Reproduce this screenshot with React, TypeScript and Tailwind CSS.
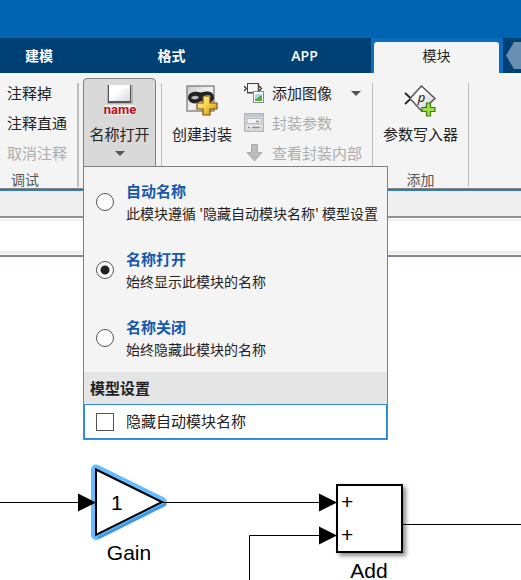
import { useState } from 'react';
import type { ReactNode } from 'react';

const uiFont = "font-['Noto_Sans_CJK_SC',sans-serif]";

function Caret() {
  return (
    <svg width="10" height="5" viewBox="0 0 10 5" aria-hidden="true">
      <path d="M0 0h10L5 5z" fill="#555" />
    </svg>
  );
}

function Separator({ wide = false }: { wide?: boolean }) {
  return <div className={`mt-[10px] mb-px shrink-0 bg-[#bdbdbd] ${wide ? 'w-[2px]' : 'w-px'}`} />;
}

function NameIcon() {
  return (
    <svg width="32" height="32" viewBox="0 0 32 32" aria-hidden="true">
      <defs>
        <linearGradient id="nameBox" x1="0" y1="0" x2="1" y2="1">
          <stop offset="0.4" stopColor="#fff" />
          <stop offset="1" stopColor="#d6d6d6" />
        </linearGradient>
      </defs>
      <rect x="3" y="0" width="26" height="19" fill="#b5b5b5" />
      <rect x="4" y="0" width="23" height="18" fill="#555" />
      <rect x="5" y="0" width="21" height="16" fill="url(#nameBox)" />
      <rect x="1" y="20" width="30" height="10" fill="#eee" />
      <text x="16" y="29" textAnchor="middle" fontSize="13" fontWeight="700" fontFamily="Liberation Sans Narrow, Roboto, sans-serif" fill="#b8141a">
        name
      </text>
    </svg>
  );
}

function MaskIcon() {
  return (
    <svg width="32" height="32" viewBox="0 0 32 32" aria-hidden="true">
      <defs>
        <linearGradient id="maskBox" x1="0" y1="0" x2="1" y2="1">
          <stop offset="0" stopColor="#c8c8c8" />
          <stop offset="0.5" stopColor="#f2f2f2" />
          <stop offset="1" stopColor="#bcbcbc" />
        </linearGradient>
        <linearGradient id="gold" x1="0" y1="0" x2="1" y2="1">
          <stop offset="0" stopColor="#fff3b0" />
          <stop offset="0.5" stopColor="#f8cf4a" />
          <stop offset="1" stopColor="#c98d12" />
        </linearGradient>
      </defs>
      <rect x="1" y="1" width="27" height="25" fill="url(#maskBox)" stroke="#8a8a8a" strokeWidth="1.5" />
      <path d="M2 13C2 8 7 6 12 7c3 1 5 0 8-.5 5-.5 8 2 8 6.5-1 5-6 6-9 4-2-1-4-1-6 0-5 3-10 1-11-4z" fill="#222" />
      <path d="M5 13c2-3 6-3 8-.5-2 2.500-6 2.500-8 .5zM18 12c2-2.500 5-2.500 7-.5-2 2-5 2.500-7 .5z" fill="#bcbcbc" />
      <path d="M17 11h7v7h7v6h-7v6h-7v-6h-6v-6h6z" fill="url(#gold)" stroke="#7d5206" strokeWidth="1.200" />
    </svg>
  );
}

function ParamWriterIcon() {
  return (
    <svg width="32" height="32" viewBox="0 0 32 32" aria-hidden="true">
      <defs>
        <linearGradient id="diamond" x1="0" y1="0" x2="1" y2="1">
          <stop offset="0.3" stopColor="#fff" />
          <stop offset="1" stopColor="#c9c9c9" />
        </linearGradient>
      </defs>
      <path d="M1 8l6 5.500-6 5.500" fill="none" stroke="#222" strokeWidth="1.800" />
      <path d="M17.500 1L31 13.500 17.500 26 6 13.500z" fill="url(#diamond)" stroke="#555" strokeWidth="1.500" />
      <text x="17.500" y="17" textAnchor="middle" fontSize="13" fontStyle="italic" fontFamily="Noto Sans, sans-serif" fill="#222">
        p
      </text>
      <path d="M22.500 18h4v4.500H31v4h-4.500V31h-4v-4.500H18v-4h4.500z" fill="#9ddd45" stroke="#3d7d14" strokeWidth="1.200" />
    </svg>
  );
}

function AddImageIcon() {
  return (
    <svg width="20" height="20" viewBox="0 0 20 20" aria-hidden="true">
      <path d="M0 3l2.500 2.500L0 8M15 3l2.500 2.500L15 8" fill="none" stroke="#333" strokeWidth="1.300" />
      <rect x="3.500" y="0.500" width="11" height="9" fill="#f5f5f5" stroke="#444" />
      <path d="M3 9.800H15M14.500 1v9" stroke="#444" strokeWidth="1.500" />
      <rect x="9.500" y="8.500" width="10" height="11" fill="#fff" stroke="#888" />
      <rect x="11" y="11" width="7" height="7" fill="#a9d5ef" />
      <path d="M11 18v-2l2-.5 3-2.500 2-.5V18z" fill="#4fae35" />
    </svg>
  );
}

function MaskParamsIcon() {
  return (
    <svg width="20" height="20" viewBox="0 0 20 20" aria-hidden="true">
      <rect x="0.500" y="0.500" width="19" height="18" fill="#d6d6d6" stroke="#b5b5b5" />
      <rect x="1" y="1" width="18" height="3" fill="#bfc9d1" />
      <rect x="3" y="5.500" width="14" height="5" fill="#f4f4f4" stroke="#bbb" />
      <rect x="3" y="12" width="14" height="4" fill="#e9e9e9" />
      <path d="M12 8.500h3M4 14.500h2M8 14.500h8" stroke="#8d8d8d" strokeWidth="1.500" />
    </svg>
  );
}

function LookInsideIcon() {
  return (
    <svg width="20" height="20" viewBox="0 0 20 20" aria-hidden="true">
      <path d="M7.500 1.500h6v8H18L10.500 18 3 9.500h4.500z" fill="#bcbcbc" stroke="#a9a9a9" />
    </svg>
  );
}

function ToolButton({ icon, label }: { icon: ReactNode; label: string }) {
  return (
    <button type="button" className="flex flex-col items-center pt-[12px] text-[15px] leading-6 whitespace-nowrap text-[#222]">
      {icon}
      <span className="mt-[5px]">{label}</span>
    </button>
  );
}

function RowButton({ icon, label, disabled = false, caret = false }: { icon?: ReactNode; label: string; disabled?: boolean; caret?: boolean }) {
  return (
    <button
      type="button"
      disabled={disabled}
      className="flex h-[30px] items-center gap-2 text-[15px] whitespace-nowrap text-[#222] disabled:text-[#adadad]"
    >
      {icon}
      <span>{label}</span>
      {caret && (
        <span className="ml-[11px]">
          <Caret />
        </span>
      )}
    </button>
  );
}

const nameOptions = [
  { id: 'auto', title: '自动名称', text: "此模块遵循 '隐藏自动模块名称' 模型设置" },
  { id: 'on', title: '名称打开', text: '始终显示此模块的名称' },
  { id: 'off', title: '名称关闭', text: '始终隐藏此模块的名称' },
];

function NameMenu() {
  const [mode, setMode] = useState('on');
  return (
    <div className="absolute top-full left-0 z-10 -mt-px w-[305px] border border-[#808080] bg-[#f4f4f4]">
      <div className="pt-px">
        {nameOptions.map((o) => (
          <label key={o.id} className="flex h-[68px] items-center gap-3 pl-3">
            <input
              type="radio"
              name="block-name"
              checked={mode === o.id}
              onChange={() => setMode(o.id)}
              className="size-[18px] shrink-0 appearance-none rounded-full border border-[#555] bg-white checked:bg-[radial-gradient(circle,#222_4px,white_5px)]"
            />
            <span className="flex flex-col whitespace-nowrap">
              <span className="text-[15px] leading-[23px] font-bold text-[#1658ae]">{o.title}</span>
              <span className="text-[14px] leading-[23px] text-[#222]">{o.text}</span>
            </span>
          </label>
        ))}
      </div>
      <h2 className="bg-[#e5e5e5] pl-1.5 text-[15px] leading-8 font-bold text-[#222]">模型设置</h2>
      <label className="flex h-[35px] items-center gap-3 border border-[#2b8ad8] bg-white pl-[11px] text-[15px] text-[#222]">
        <input type="checkbox" className="size-[18px] shrink-0 appearance-none border border-[#555] bg-white checked:bg-[#1658ae]" />
        隐藏自动模块名称
      </label>
    </div>
  );
}

function SectionLabel({ children }: { children: ReactNode }) {
  return <div className="text-[14px] leading-[17px] text-[#555]">{children}</div>;
}

function Tabs() {
  return (
    <nav role="tablist" className="flex h-[35px] bg-[#004175] font-['Open_Sans','Noto_Sans_CJK_SC',sans-serif] text-[14px] font-semibold text-white">
      <button role="tab" type="button" className="w-[105px] pr-[27px]">建模</button>
      <button role="tab" type="button" className="w-[133px]">格式</button>
      <button role="tab" type="button" className="w-[133px]">APP</button>
      <div className="flex w-[132px] bg-[#0d6cbd] pt-1 pr-1 pl-[3px]">
        <button role="tab" type="button" aria-selected="true" className="flex-1 rounded-t-[3px] bg-[#f4f4f4] pb-1 font-normal text-[#222]">
          模块
        </button>
      </div>
      <div className="min-w-0 flex-1 overflow-hidden pt-1 pl-[3px]">
        <svg width="40" height="27" viewBox="0 0 40 27" aria-hidden="true">
          <path d="M8 0H32l8 13.500L32 27H8L0 13.500z" fill="#6b8fb0" />
        </svg>
      </div>
    </nav>
  );
}

function Ribbon() {
  return (
    <div className="flex h-[118px] border-b-2 border-[#2f7ab8] bg-[#f4f4f4]">
      <div className="flex w-full border-b border-[#808080]">
        <section className="flex w-[77px] shrink-0 flex-col pt-[5px] pl-[7px]">
          <RowButton label="注释掉" />
          <RowButton label="注释直通" />
          <RowButton label="取消注释" disabled />
          <div className="mt-auto pl-1">
            <SectionLabel>调试</SectionLabel>
          </div>
        </section>
        <Separator wide />
        <section className="relative mt-[5px] ml-1 h-[89px] w-[73px] shrink-0">
          <button
            type="button"
            aria-haspopup="true"
            aria-expanded="true"
            className="flex size-full flex-col items-center rounded-t-[4px] border border-[#808080] bg-[#d9d9d9] pt-[6px] text-[15px] leading-6 whitespace-nowrap text-[#222]"
          >
            <NameIcon />
            <span className="mt-[5px]">名称打开</span>
            <span className="mt-[5px] flex">
              <Caret />
            </span>
          </button>
          <NameMenu />
        </section>
        <div className="w-[5px] shrink-0" />
        <Separator />
        <section className="flex w-[210px] shrink-0 gap-3 pl-[10px]">
          <div>
            <ToolButton icon={<MaskIcon />} label="创建封装" />
          </div>
          <div className="pt-[5px]">
            <RowButton icon={<AddImageIcon />} label="添加图像" caret />
            <RowButton icon={<MaskParamsIcon />} label="封装参数" disabled />
            <RowButton icon={<LookInsideIcon />} label="查看封装内部" disabled />
          </div>
        </section>
        <Separator />
        <section className="flex w-[95px] shrink-0 flex-col items-center">
          <ToolButton icon={<ParamWriterIcon />} label="参数写入器" />
          <div className="mt-auto">
            <SectionLabel>添加</SectionLabel>
          </div>
        </section>
        <Separator />
      </div>
    </div>
  );
}

function Diagram() {
  return (
    <svg className="block h-[323px] w-full" fontFamily="Liberation Sans, Arial, sans-serif" fontSize="21">
      <defs>
        <filter id="shade" x="-20%" y="-20%" width="150%" height="150%">
          <feDropShadow dx="3" dy="3" stdDeviation="2" floodOpacity="0.45" />
        </filter>
      </defs>
      <path d="M96 212.500L162 245 96 278z" fill="#66bcff" stroke="#66bcff" strokeWidth="10" strokeLinejoin="round" />
      <path d="M98 281L166 247" stroke="#4398df" strokeWidth="3" />
      <path d="M96 212.500L162 245 96 278z" fill="#fff" stroke="#000" strokeWidth="2" />
      <path d="M0 245.500H80M162 245.500H320M249.500 323V278.500H320" fill="none" stroke="#000" />
      <line x1="403" y1="267.500" x2="100%" y2="267.500" stroke="#000" />
      <path d="M78 236.500L96 245.500 78 254.500z" />
      <rect x="337" y="228" width="65" height="67" fill="#fff" stroke="#000" strokeWidth="2" filter="url(#shade)" />
      <path d="M319 236.500L337 245.500 319 254.500zM319 269.500L337 278.500 319 287.500z" />
      <text x="111" y="253">1</text>
      <text x="341" y="252">+</text>
      <text x="341" y="285">+</text>
      <text x="129" y="303" textAnchor="middle">Gain</text>
      <text x="369" y="321" textAnchor="middle">Add</text>
    </svg>
  );
}

export default function App() {
  return (
    <div className={`min-h-screen overflow-hidden bg-white ${uiFont}`}>
      <header className="h-[38px] bg-[#0064b2]" />
      <Tabs />
      <Ribbon />
      <div className="h-[27px] border-b-2 border-[#919195] bg-[#efefef]" />
      <div className="mt-px h-[35px] border-t-2 border-b-3 border-[#efefef]" />
      <div className="mt-px h-[2px] bg-[#80858f]" />
      <main>
        <Diagram />
      </main>
    </div>
  );
}
